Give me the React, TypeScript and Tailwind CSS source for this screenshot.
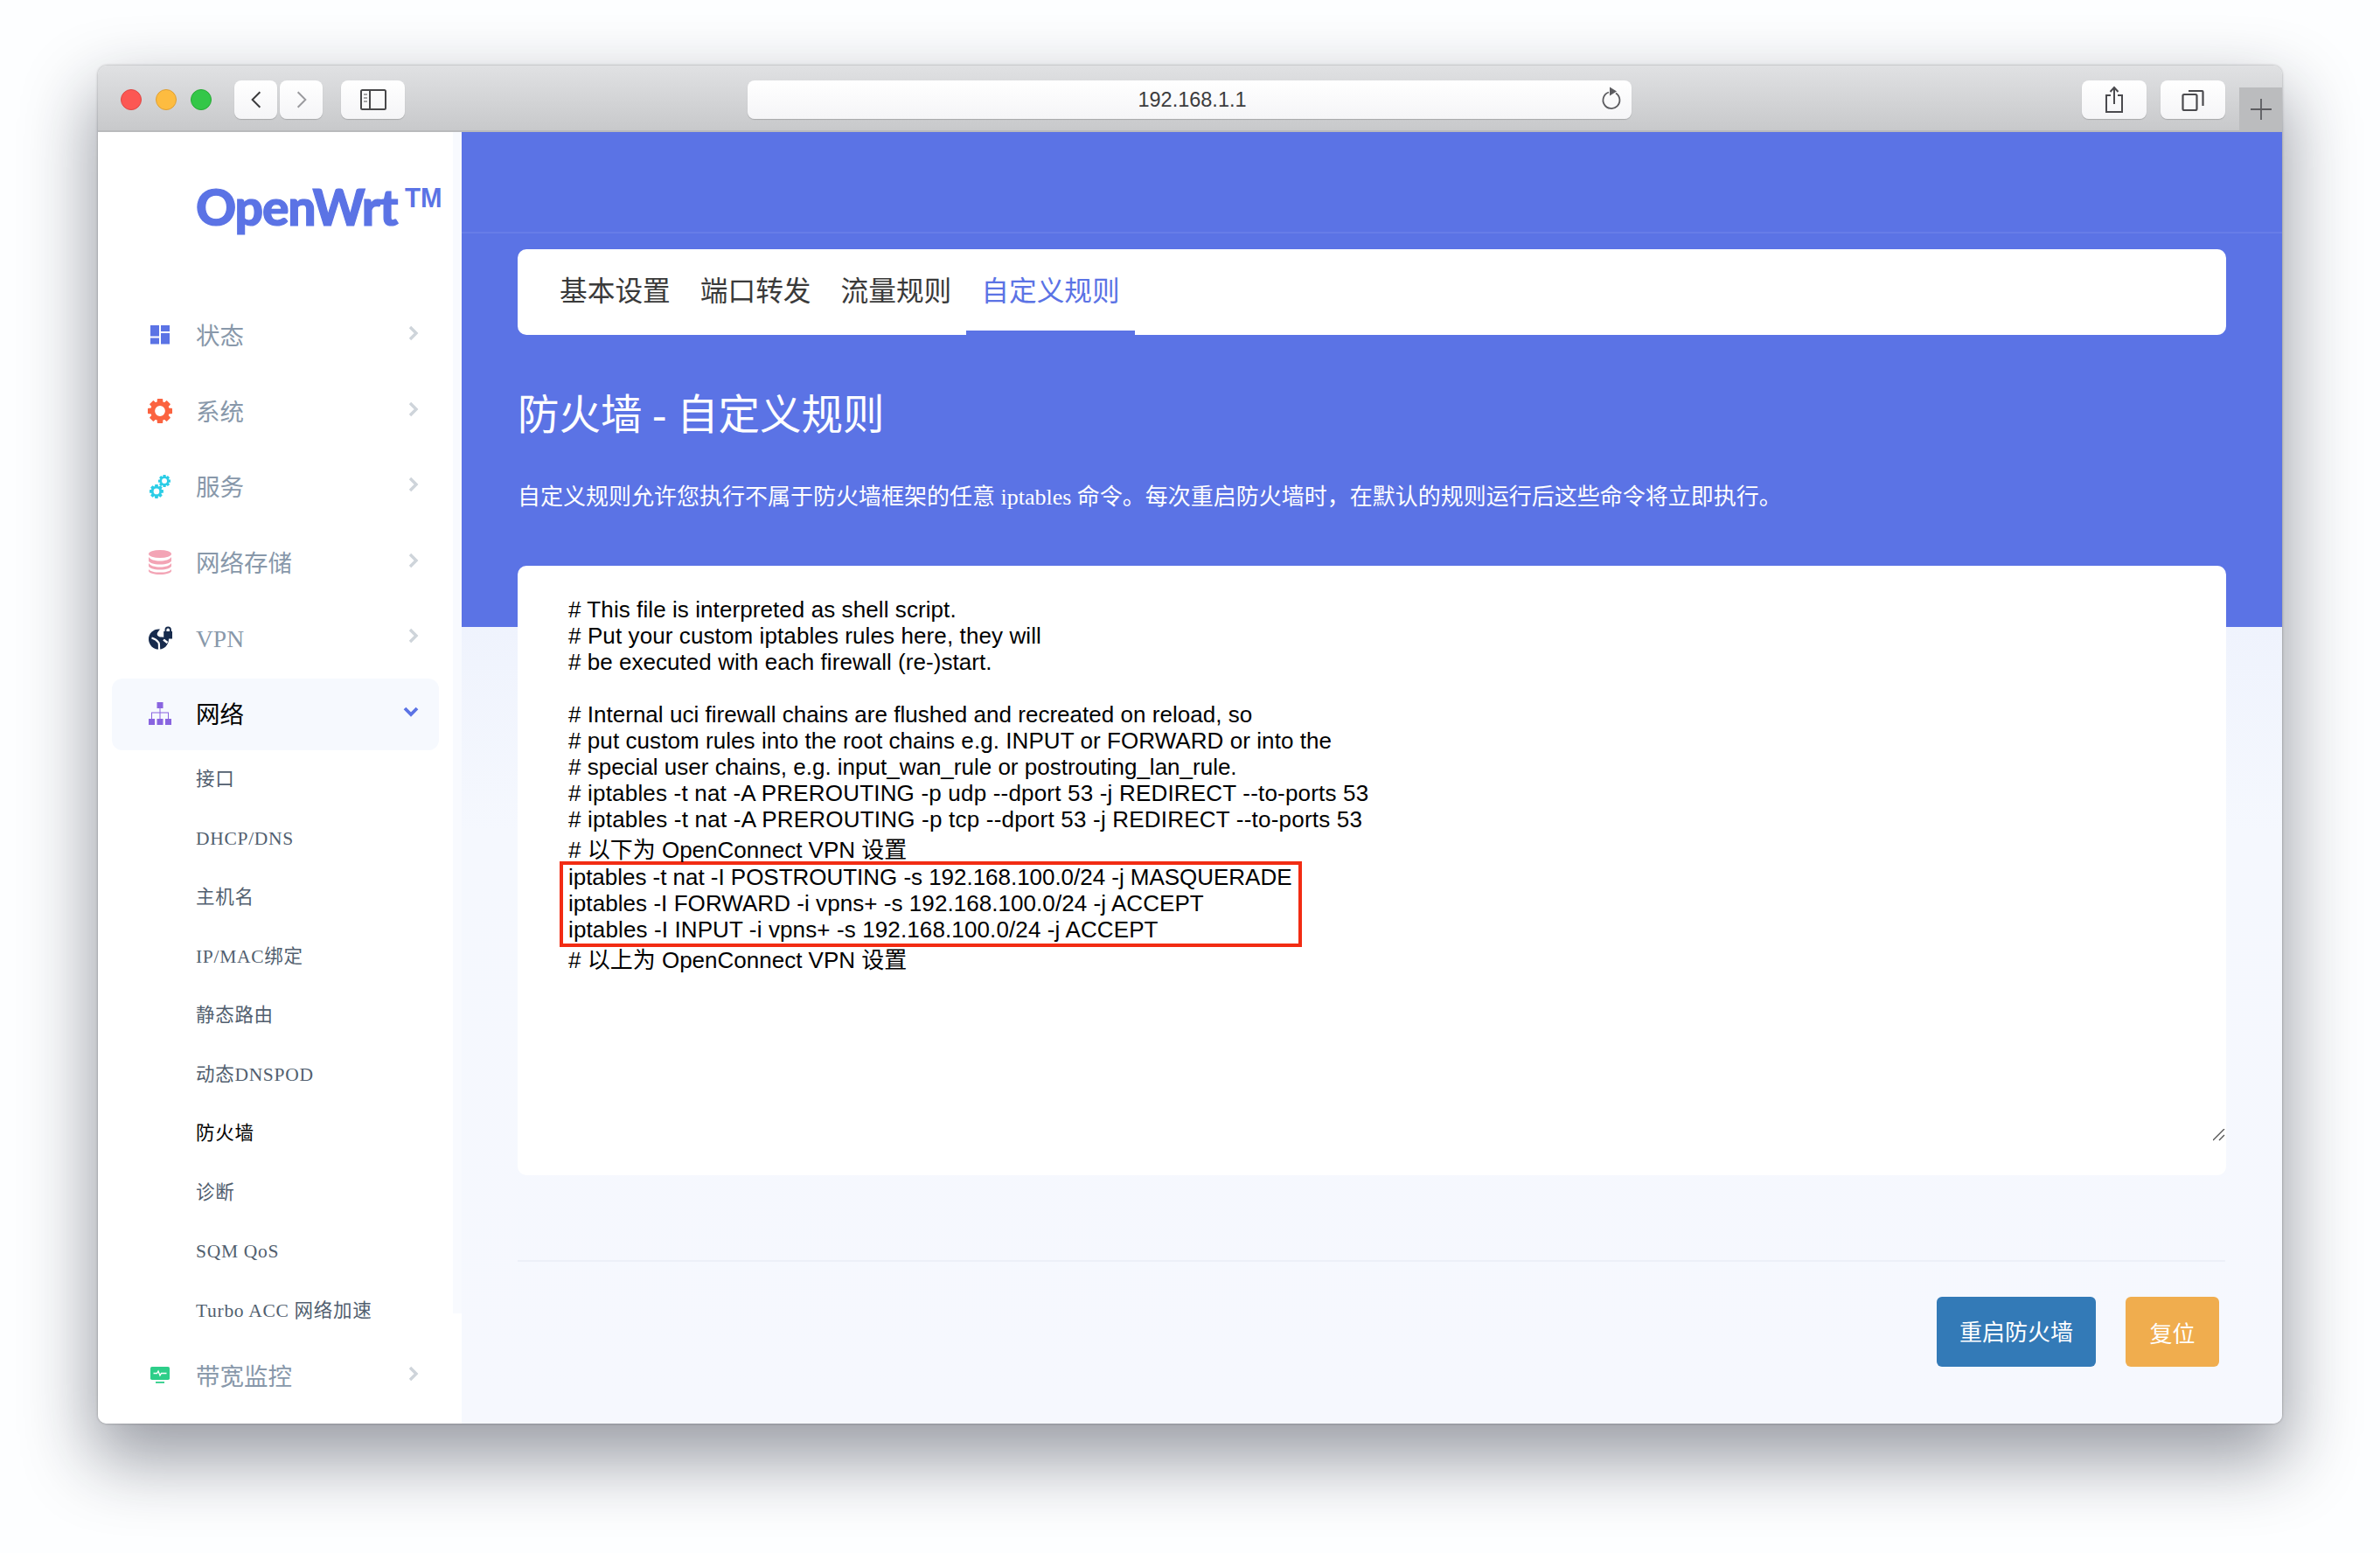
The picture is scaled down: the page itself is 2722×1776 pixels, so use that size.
import React from "react";

const CJK_SERIF = "font-['Liberation_Serif','Noto_Sans_CJK_SC',serif]";

function Dash() {
  return (
    <svg viewBox="0 0 22 22" className="w-[22px] h-[22px]" fill="#5b73e5">
      <rect x="0" y="0" width="10" height="12.5" />
      <rect x="0" y="14.5" width="10" height="7" />
      <rect x="12" y="0" width="10" height="7" />
      <rect x="12" y="9" width="10" height="12.5" />
    </svg>
  );
}

function GearShape({ color }: { color: string }) {
  const teeth = [0, 45, 90, 135, 180, 225, 270, 315];
  return (
    <g>
      <g fill={color}>
        {teeth.map((a) => (
          <rect key={a} x="11.5" y="0" width="7" height="6" rx="1" transform={`rotate(${a} 15 15)`} />
        ))}
      </g>
      <circle cx="15" cy="15" r="9" fill="none" stroke={color} strokeWidth="5.4" />
    </g>
  );
}

function Gear() {
  return (
    <svg viewBox="0 0 30 30" className="w-[28px] h-[28px]">
      <GearShape color="#fb6340" />
    </svg>
  );
}

function Gears() {
  return (
    <svg viewBox="0 0 24 27" className="w-[24px] h-[27px]">
      <g transform="translate(10 0) scale(0.47)">
        <GearShape color="#2bcde6" />
      </g>
      <g transform="translate(0 11) scale(0.53)">
        <GearShape color="#2bcde6" />
      </g>
    </svg>
  );
}

function Db() {
  return (
    <svg viewBox="0 0 26 28" className="w-[26px] h-[28px]" fill="#f3a4b5">
      <ellipse cx="13" cy="4.5" rx="13" ry="4.5" />
      <path d="M0 8c2 3 7 4.5 13 4.5S24 11 26 8v4c0 2.6-5.8 4.6-13 4.6S0 14.6 0 12z" />
      <path d="M0 16c2 3 7 4.5 13 4.5S24 19 26 16v3c0 2.6-5.8 4.600-13 4.600S0 21.600 0 19z" transform="translate(0 -1)" />
      <path d="M0 22c2 2.6 7 3.6 13 3.6S24 24.6 26 22v2c0 2.3-5.8 4-13 4S0 26.300 0 24z" />
    </svg>
  );
}

function Vpn() {
  return (
    <svg viewBox="0 0 27 27" className="w-[27px] h-[27px]">
      <circle cx="11.500" cy="15" r="11.500" fill="#172b4d" />
      <path d="M14 2.500C11 6 9 8 10 10.500c2.500 3.500 7 1.500 14.500 3V2.500z" fill="#ffffff" />
      <path d="M3.500 13.500c3.500 1 6 2.500 8 5.500 1 2.500 0 5 .800 8" fill="none" stroke="#ffffff" strokeWidth="2.200" />
      <path d="M17 15.500l4.500 3.500" fill="none" stroke="#ffffff" strokeWidth="2.500" />
      <path d="M18.500 6V4.200a3.700 3.700 0 0 1 7.400 0V6H27v8.500H17.200V6zM20.400 6h3.600V4.200a1.800 1.800 0 0 0-3.600 0z" fill="#172b4d" fillRule="evenodd" />
    </svg>
  );
}

function Sitemap() {
  return (
    <svg viewBox="0 0 26 26" className="w-[26px] h-[26px]" fill="#8965e0">
      <rect x="9.500" y="0" width="7" height="7" />
      <rect x="0" y="19" width="7" height="7" />
      <rect x="9.500" y="19" width="7" height="7" />
      <rect x="19" y="19" width="7" height="7" />
      <path d="M12.500 7h1v4.500h9.500V19h-1v-6.500h-8.500V19h-1v-6.500H4V19H3v-7.500h9.500z" />
    </svg>
  );
}

function Monitor() {
  return (
    <svg viewBox="0 0 22 19" className="w-[22px] h-[19px]">
      <rect x="0" y="0" width="22" height="15" rx="1.800" fill="#2dce89" />
      <path d="M3.500 7.500h4l1.500-2.500 2 5 1.500-2.500h6" fill="none" stroke="#fff" strokeWidth="1.300" />
      <rect x="6" y="17" width="10" height="1.800" fill="#2dce89" />
    </svg>
  );
}

function Chev() {
  return (
    <svg viewBox="0 0 12 18" className="w-[12px] h-[18px]" fill="none" stroke="#ced4da" strokeWidth="3.400">
      <path d="M2 2l7 7-7 7" />
    </svg>
  );
}

function ChevDown() {
  return (
    <svg viewBox="0 0 18 12" className="w-[18px] h-[12px]" fill="none" stroke="#5b73e5" strokeWidth="3.800">
      <path d="M2 2l7 7 7-7" />
    </svg>
  );
}

function MainItem({ icon, label, active }: { icon: React.ReactNode; label: string; active?: boolean }) {
  return (
    <div
      className={
        "flex items-center h-[82px] mb-[4.500px] pl-[40px] pr-[23px] rounded-[12px] " +
        (active ? "bg-[#f6f9fe] text-[#000000]" : "text-[#8898aa]")
      }
    >
      <div className="w-[56px] flex justify-start -mt-[2px] shrink-0">
        <div className="flex items-center justify-center w-[30px] shrink-0">{icon}</div>
      </div>
      <span className="flex-1 text-[27.5px] leading-[34px] pt-[2px]">{label}</span>
      <div className="-mt-[6px] flex">{active ? <ChevDown /> : <Chev />}</div>
    </div>
  );
}

const subs = [
  "接口",
  "DHCP/DNS",
  "主机名",
  "IP/MAC绑定",
  "静态路由",
  "动态DNSPOD",
  "防火墙",
  "诊断",
  "SQM QoS",
  "Turbo ACC 网络加速",
];

const code1: [string, string][] = [
  ["# This file is interpreted as shell script.", "tracking-[0.08px]"],
  ["# Put your custom iptables rules here, they will", "tracking-[0.1px]"],
  ["# be executed with each firewall (re-)start.", "tracking-[0.04px]"],
  ["\u00a0", ""],
  ["# Internal uci firewall chains are flushed and recreated on reload, so", "tracking-[0.025px]"],
  ["# put custom rules into the root chains e.g. INPUT or FORWARD or into the", "tracking-[0.07px]"],
  ["# special user chains, e.g. input_wan_rule or postrouting_lan_rule.", ""],
  ["# iptables -t nat -A PREROUTING -p udp --dport 53 -j REDIRECT --to-ports 53", "tracking-[0.19px]"],
  ["# iptables -t nat -A PREROUTING -p tcp --dport 53 -j REDIRECT --to-ports 53", "tracking-[0.21px]"],
];

const boxed: [string, string][] = [
  ["iptables -t nat -I POSTROUTING -s 192.168.100.0/24 -j MASQUERADE", "tracking-[-0.03px]"],
  ["iptables -I FORWARD -i vpns+ -s 192.168.100.0/24 -j ACCEPT", "tracking-[0.06px]"],
  ["iptables -I INPUT -i vpns+ -s 192.168.100.0/24 -j ACCEPT", "tracking-[0.12px]"],
];

function ChromeBtn({ w, children, cls }: { w: string; children: React.ReactNode; cls?: string }) {
  return (
    <div
      className={
        "h-[44px] rounded-[8px] bg-[linear-gradient(#ffffff,#f5f5f7)] shadow-[0_1px_1px_rgba(0,0,0,0.18)] flex items-center justify-center shrink-0 " +
        w +
        " " +
        (cls ?? "")
      }
    >
      {children}
    </div>
  );
}

export default function App() {
  return (
    <div className="w-[2722px] h-[1776px] bg-[#fdfeff] overflow-hidden pt-[75px] pl-[112px]">
      <div className="w-[2498px] h-[1553px] rounded-[10px] flex flex-col overflow-hidden shadow-[0_36px_80px_6px_rgba(20,25,40,0.42),0_0_3px_rgba(0,0,0,0.35)]">
        {/* browser chrome */}
        <div className="h-[76px] shrink-0 bg-[linear-gradient(#e0e1e3,#c8c9cb)] border-b-[2px] border-[#b9babc] flex items-start pt-[17px] pl-[26px]">
          <div className="flex gap-[16px] mt-[10px] shrink-0">
            <div className="w-[24px] h-[24px] rounded-full bg-[#fc5753] border border-[#df4744]" />
            <div className="w-[24px] h-[24px] rounded-full bg-[#fdbc40] border border-[#de9f34]" />
            <div className="w-[24px] h-[24px] rounded-full bg-[#33c748] border border-[#27aa35]" />
          </div>
          <div className="flex gap-[3px] ml-[26px]">
            <ChromeBtn w="w-[49px]">
              <svg viewBox="0 0 16 24" className="w-[14px] h-[24px]" fill="none" stroke="#3a3a3c" strokeWidth="2.200">
                <path d="M13 2L3 12l10 10" />
              </svg>
            </ChromeBtn>
            <ChromeBtn w="w-[49px]">
              <svg viewBox="0 0 16 24" className="w-[14px] h-[24px]" fill="none" stroke="#9a9a9e" strokeWidth="2.200">
                <path d="M3 2l10 10L3 22" />
              </svg>
            </ChromeBtn>
          </div>
          <ChromeBtn w="w-[73px]" cls="ml-[21px]">
            <svg viewBox="0 0 30 24" className="w-[30px] h-[24px]" fill="none" stroke="#48484a" strokeWidth="2">
              <rect x="1" y="1" width="28" height="22" rx="1.500" />
              <path d="M11 1v22" />
              <path d="M4 6h4M4 10h4M4 14h4" strokeWidth="1.600" stroke="#8a8a8c" />
            </svg>
          </ChromeBtn>
          <ChromeBtn w="w-[1011px]" cls="ml-[392px] relative">
            <span className="font-['Liberation_Sans',sans-serif] text-[23.5px] text-[#3c3c3e] pl-[6px] pt-[2px]">192.168.1.1</span>
            <svg viewBox="0 0 24 30" className="absolute right-[11px] top-[6px] w-[24px] h-[30px]" fill="none" stroke="#5c5c60" strokeWidth="1.800">
              <path d="M9 7.500a9.500 9.500 0 1 0 8 1" />
              <path d="M10 1.500l8 5-8 5z" fill="#5c5c60" stroke="none" />
            </svg>
          </ChromeBtn>
          <div className="flex-1" />
          <ChromeBtn w="w-[74px]">
            <svg viewBox="0 0 24 32" className="w-[24px] h-[32px]" fill="none" stroke="#4a4a4e" strokeWidth="2">
              <path d="M8 11H3v19h18V11h-5" />
              <path d="M12 21V2" />
              <path d="M7.500 7L12 2l4.500 5" />
            </svg>
          </ChromeBtn>
          <ChromeBtn w="w-[74px]" cls="ml-[16px]">
            <svg viewBox="0 0 26 26" className="w-[26px] h-[26px]" fill="none" stroke="#4a4a4e" strokeWidth="2.200">
              <rect x="1.500" y="7" width="16" height="18" rx="1.500" />
              <path d="M8 3h15.500a1 1 0 0 1 1 1v16" />
            </svg>
          </ChromeBtn>
          <div className="w-[49px] h-[50px] ml-[16px] mt-[8px] bg-[#bbbcbe] flex items-center justify-center shrink-0">
            <svg viewBox="0 0 24 24" className="w-[24px] h-[24px]" stroke="#5c5c60" strokeWidth="1.800">
              <path d="M0 12h24M12 0v24" />
            </svg>
          </div>
        </div>

        {/* body */}
        <div className={"flex-1 flex min-h-0 " + CJK_SERIF}>
          {/* sidebar */}
          <div className="w-[416px] shrink-0 bg-white bg-[linear-gradient(#f8fafe,#f8fafe)] bg-no-repeat bg-[size:10px_1351px] bg-[position:right_top] flex flex-col pl-[16px] pr-[26px] overflow-hidden">
            <div className="h-[192px] shrink-0 pl-[96px] pt-[50px] flex items-start text-[#5b73e5] whitespace-nowrap">
              <span className="font-['Lato',sans-serif] font-black text-[57px] leading-[70px] tracking-[-1.200px] [-webkit-text-stroke:1.2px_#5b73e5]">OpenWrt</span>
              <span className="font-['Liberation_Sans',sans-serif] font-bold text-[31px] leading-[36px] ml-[9px] mt-[8px] scale-x-[0.95] origin-left">TM</span>
            </div>
            <MainItem icon={<Dash />} label="状态" />
            <MainItem icon={<Gear />} label="系统" />
            <MainItem icon={<Gears />} label="服务" />
            <MainItem icon={<Db />} label="网络存储" />
            <MainItem icon={<Vpn />} label="VPN" />
            <MainItem icon={<Sitemap />} label="网络" active />
            <div className="flex flex-col -mt-[4.500px] pl-[96px]">
              {subs.map((s) => (
                <div
                  key={s}
                  className={
                    "h-[67.500px] shrink-0 flex items-center text-[21.5px] tracking-[0.7px] whitespace-nowrap " +
                    (s === "防火墙" ? "text-[#000000]" : "text-[#525f6f]")
                  }
                >
                  {s}
                </div>
              ))}
            </div>
            <MainItem icon={<Monitor />} label="带宽监控" />
          </div>

          {/* main */}
          <div className="flex-1 min-w-0 flex flex-col bg-[linear-gradient(#5b73e5_0,#5b73e5_566px,#eff3fd_566px,#f5f8fe_800px,#f6f8fe_100%)]">
            <div className="h-[116px] shrink-0 border-b-[2px] border-[#677de8]" />
            <div className="pl-[64px] pr-[64px] pt-[18px] flex flex-col">
              {/* tabs */}
              <div className="h-[98px] bg-white rounded-[10px] flex pl-[31px] overflow-hidden">
                {["基本设置", "端口转发", "流量规则", "自定义规则"].map((t, i) => (
                  <div
                    key={t}
                    className={
                      "h-full flex items-center px-[17px] pt-[4px] text-[31.7px] border-b-[5px] " +
                      (i === 3 ? "border-[#5b73e5] text-[#5b73e5]" : "border-transparent text-[#3a3a3a]")
                    }
                  >
                    {t}
                  </div>
                ))}
              </div>

              <h1 className="mt-[61px] text-[47.5px] leading-[62px] text-white font-normal whitespace-nowrap">防火墙 - 自定义规则</h1>
              <p className="mt-[45px] text-[26px] leading-[36px] text-white whitespace-nowrap">
                自定义规则允许您执行不属于防火墙框架的任意 iptables 命令。每次重启防火墙时，在默认的规则运行后这些命令将立即执行。
              </p>

              {/* textarea */}
              <div className="relative mt-[60px] h-[697px] bg-white rounded-[10px] pt-[36px] pl-[58px] font-['Liberation_Sans','Noto_Sans_CJK_SC',sans-serif] text-[26px] text-black whitespace-nowrap">
                {code1.map(([l, t], i) => (
                  <div key={i} className={"h-[30px] leading-[28px] " + t}>
                    {l}
                  </div>
                ))}
                <div className="h-[32px] pt-[4px] leading-[30px]"># 以下为 OpenConnect VPN 设置</div>
                <div className="-ml-[10px] w-[849px] border-[4px] border-[#f22c13] pl-[6px]">
                  {boxed.map(([l, t]) => (
                    <div key={l} className={"h-[30px] leading-[28px] " + t}>
                      {l}
                    </div>
                  ))}
                </div>
                <div className="h-[30px] leading-[30px]"># 以上为 OpenConnect VPN 设置</div>
                <svg viewBox="0 0 14 14" className="absolute right-[1px] bottom-[39px] w-[14px] h-[14px]" stroke="#555" strokeWidth="1.400">
                  <path d="M0 13L13 0M7 13l6-6" />
                </svg>
              </div>

              {/* footer */}
              <div className="mt-[97px] mr-[1px] border-t-[2px] border-[#edf0f8]" />
              <div className="mt-[40px] flex justify-end gap-[34px] pr-[8px] font-['Noto_Sans_CJK_SC',sans-serif] text-white text-[26px]">
                <div className="w-[182px] h-[80px] pb-[4px] rounded-[6px] bg-[#337ab7] flex items-center justify-center">重启防火墙</div>
                <div className="w-[107px] h-[80px] rounded-[6px] bg-[#f0ad4e] flex items-center justify-center">复位</div>
              </div>
            </div>
          </div>
        </div>
      </div>
    </div>
  );
}
